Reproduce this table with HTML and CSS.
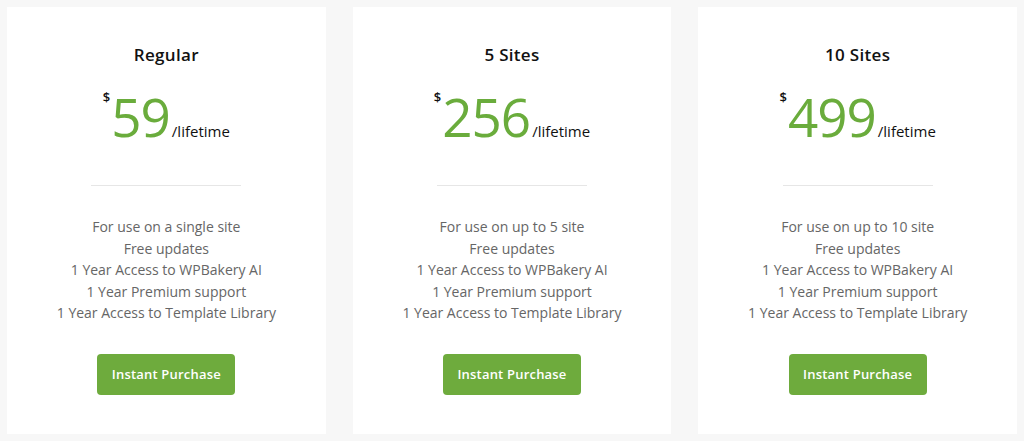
FILE: index.html
```html
<!DOCTYPE html>
<html lang="en">
<head>
<meta charset="utf-8">
<title>Pricing</title>
<link rel="stylesheet" href="styles.css">
</head>
<body>
<div class="plans">
  <div class="card">
    <h3 class="title">Regular</h3>
    <div class="price"><span class="cur">$</span><span class="amt">59</span><span class="per">/lifetime</span></div>
    <hr class="divider">
    <ul class="features">
      <li>For use on a single site</li>
      <li>Free updates</li>
      <li>1 Year Access to WPBakery AI</li>
      <li>1 Year Premium support</li>
      <li>1 Year Access to Template Library</li>
    </ul>
    <a class="btn" href="#">Instant Purchase</a>
  </div>
  <div class="card">
    <h3 class="title">5 Sites</h3>
    <div class="price"><span class="cur">$</span><span class="amt">256</span><span class="per">/lifetime</span></div>
    <hr class="divider">
    <ul class="features">
      <li>For use on up to 5 site</li>
      <li>Free updates</li>
      <li>1 Year Access to WPBakery AI</li>
      <li>1 Year Premium support</li>
      <li>1 Year Access to Template Library</li>
    </ul>
    <a class="btn" href="#">Instant Purchase</a>
  </div>
  <div class="card">
    <h3 class="title">10 Sites</h3>
    <div class="price"><span class="cur">$</span><span class="amt">499</span><span class="per">/lifetime</span></div>
    <hr class="divider">
    <ul class="features">
      <li>For use on up to 10 site</li>
      <li>Free updates</li>
      <li>1 Year Access to WPBakery AI</li>
      <li>1 Year Premium support</li>
      <li>1 Year Access to Template Library</li>
    </ul>
    <a class="btn" href="#">Instant Purchase</a>
  </div>
</div>
</body>
</html>
```

FILE: styles.css
```css
html, body {
  margin: 0;
  padding: 0;
  background: #f7f7f7;
  font-family: "Open Sans", "Liberation Sans", sans-serif;
}

.plans {
  display: grid;
  grid-template-columns: repeat(3, 1fr);
  gap: 27px;
  padding: 7px 7px 0 7px;
}

.card {
  background: #fff;
  height: 427px;
  box-sizing: border-box;
  padding-top: 36px;
  display: flex;
  flex-direction: column;
  align-items: center;
  text-align: center;
}

.title {
  margin: 0;
  font-size: 17px;
  line-height: 24px;
  font-weight: 600;
  color: #111;
  letter-spacing: 0.3px;
}

.price {
  margin-top: 24px;
  height: 52px;
  line-height: 52px;
  white-space: nowrap;
}

.cur {
  display: inline-block;
  vertical-align: top;
  font-size: 13px;
  line-height: 12px;
  font-weight: 600;
  color: #111;
  margin-right: 1px;
}

.amt {
  font-size: 53px;
  font-weight: 400;
  color: #6aac3c;
  letter-spacing: -1px;
}

.per {
  font-size: 15px;
  color: #111;
  margin-left: 2px;
}

.divider {
  width: 150px;
  height: 1px;
  border: 0;
  background: #e6e6e6;
  margin: 42px 0 0 0;
}

.features {
  list-style: none;
  margin: 30px 0 0 0;
  padding: 0;
  font-size: 14px;
  line-height: 21.6px;
  color: #666;
}

.btn {
  margin-top: 30px;
  display: flex;
  align-items: center;
  justify-content: center;
  width: 138px;
  height: 41px;
  background: #6eab3d;
  border-radius: 4px;
  color: #fff;
  font-size: 13px;
  font-weight: 600;
  text-decoration: none;
  letter-spacing: 0.2px;
}
```
